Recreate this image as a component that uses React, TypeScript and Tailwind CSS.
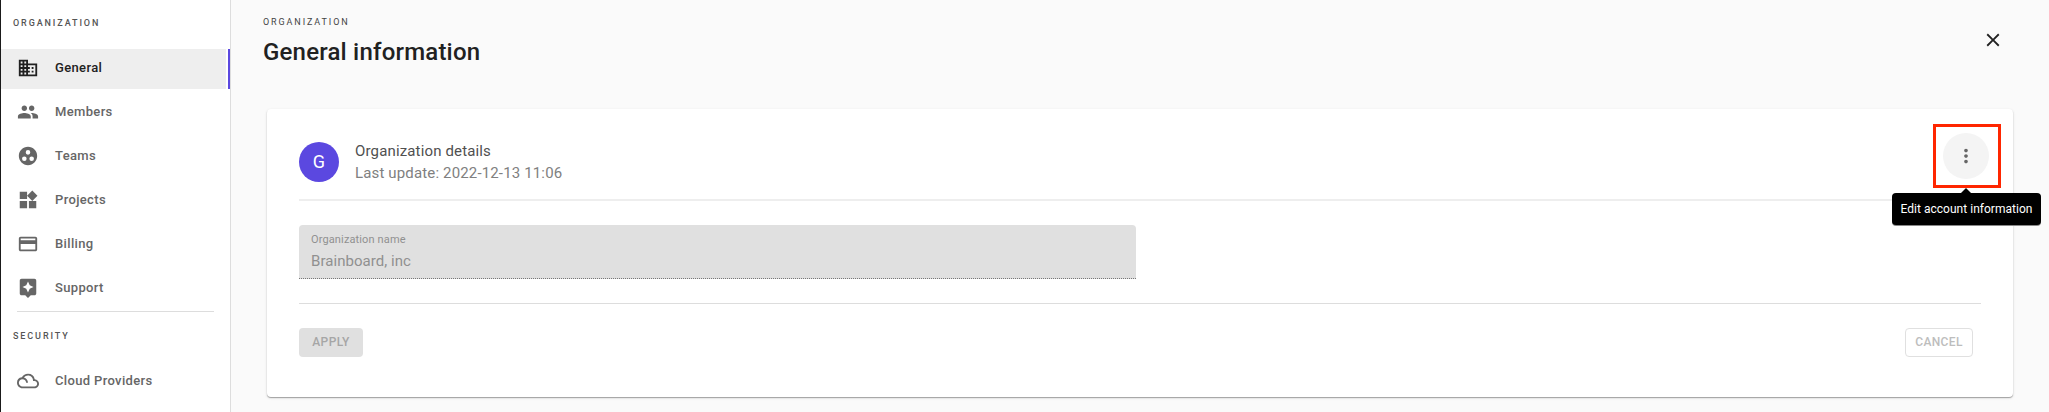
import type { ReactNode } from "react";
import type { IconType } from "react-icons";
import {
  MdDomain,
  MdPeople,
  MdGroupWork,
  MdWidgets,
  MdCreditCard,
  MdAssistant,
  MdFilterDrama,
  MdClose,
  MdMoreVert,
} from "react-icons/md";

type Item = { label: string; icon: IconType; active?: boolean };

const organization: Item[] = [
  { label: "General", icon: MdDomain, active: true },
  { label: "Members", icon: MdPeople },
  { label: "Teams", icon: MdGroupWork },
  { label: "Projects", icon: MdWidgets },
  { label: "Billing", icon: MdCreditCard },
  { label: "Support", icon: MdAssistant },
];

function NavItem({ label, icon: Icon, active }: Item) {
  return (
    <li
      className={
        active
          ? "flex h-10 border-r-2 border-[#5b48e0] pr-0.5 text-[#212121]"
          : "flex h-10 border-r-2 border-transparent pr-0.5 text-[#666666]"
      }
    >
      <a className={active ? "flex flex-1 items-center bg-[#eeeeee] pb-[3px] pl-4" : "flex flex-1 items-center pb-[3px] pl-4"}>
        <Icon className="size-[22px]" />
        <span className="ml-4 text-[13px] leading-5 font-medium tracking-[0.35px]">{label}</span>
      </a>
    </li>
  );
}

function SectionTitle({ children }: { children: ReactNode }) {
  return <h2 className="pl-3 text-[9px] leading-4 font-medium tracking-[1.9px] text-[#555555]">{children}</h2>;
}

export default function App() {
  return (
    <div className="flex h-[412px] w-[2049px] overflow-hidden bg-[#fafafa] font-['Roboto',sans-serif]">
      <nav className="flex w-[231px] shrink-0 flex-col border-r border-l border-r-[#dddddd] border-l-[#1a1a1a] bg-white pt-[15px]">
        <SectionTitle>ORGANIZATION</SectionTitle>
        <ul className="mt-[18px] flex flex-col gap-1">
          {organization.map((item) => (
            <NavItem key={item.label} {...item} />
          ))}
        </ul>
        <hr className="mt-0.5 mr-4 mb-4 ml-4 border-[#dddddd]" />
        <SectionTitle>SECURITY</SectionTitle>
        <ul className="mt-[18px]">
          <NavItem label="Cloud Providers" icon={MdFilterDrama} />
        </ul>
      </nav>

      <main className="flex flex-1 flex-col pr-9 pl-9">
        <header className="flex h-[109px] shrink-0 justify-between pr-2">
          <div className="-ml-1 pt-[14px]">
            <p className="text-[9px] leading-4 tracking-[1.9px] text-[#444444]">ORGANIZATION</p>
            <h1 className="mt-1.5 text-2xl leading-8 font-medium tracking-[0.2px] text-[#212121]">General information</h1>
          </div>
          <button className="mt-[29px] mr-[1px] size-[22px] text-[#212121]">
            <MdClose className="size-[22px]" />
          </button>
        </header>

        <section className="h-[288px] rounded bg-white px-8 shadow-[0_1px_1px_rgba(0,0,0,0.3),0_1px_3px_rgba(0,0,0,0.12)]">
          <div className="flex h-[92px] items-start justify-between border-b-2 border-[#eeeeee]">
            <div className="flex pt-[33px]">
              <div className="flex size-10 items-center justify-center rounded-full bg-[#5b48e0] text-lg text-white">G</div>
              <div className="ml-4 -mt-[2px] text-[15px] leading-[22px] tracking-[0.15px]">
                <p className="text-[#505050]">Organization details</p>
                <p className="text-[#808080]">Last update: 2022-12-13 11:06</p>
              </div>
            </div>
            <div className="relative -mr-5 mt-[15px] flex h-16 w-[68px] items-center justify-center border-[3px] border-[#ff2600] pr-0.5">
              <button className="flex size-[46px] items-center justify-center rounded-full bg-[#f4f4f4] text-[#666666]">
                <MdMoreVert className="size-[22px]" />
              </button>
              <div className="absolute top-[66px] left-[-44px] z-10 flex h-8 w-[149px] items-center justify-center rounded bg-black text-[12px] tracking-[0.02px] whitespace-nowrap text-white shadow-[0_1px_0_#888888]">
                <svg className="absolute -top-[5px] left-[68px]" width="12" height="6" viewBox="0 0 12 6">
                  <path d="M0 6 6 0l6 6z" fill="black" />
                </svg>
                Edit account information
              </div>
            </div>
          </div>

          <div className="mt-6 h-[54px] w-[837px] rounded-t border-b border-dotted border-[#777777] bg-[#e0e0e0] px-3 pt-[7px] text-[#909090]">
            <p className="text-[11px] leading-4 tracking-[0.13px]">Organization name</p>
            <p className="mt-0.5 text-[15px] leading-[22px] tracking-[0.05px]">Brainboard, inc</p>
          </div>

          <div className="mt-6 flex justify-between border-t border-[#dddddd] pt-6 pr-2 text-[12px] font-medium tracking-[0.35px]">
            <button className="h-[29px] w-16 rounded bg-[#e0e0e0] pb-0.5 text-[#a6a6a6]">APPLY</button>
            <button className="h-[29px] w-[68px] rounded border border-[#e0e0e0] pb-0.5 text-[#bdbdbd]">CANCEL</button>
          </div>
        </section>
      </main>
    </div>
  );
}
